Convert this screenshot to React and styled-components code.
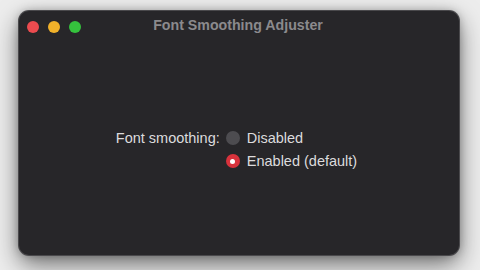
import styled, { createGlobalStyle } from "styled-components";

const GlobalStyle = createGlobalStyle`
  html, body {
    margin: 0;
    padding: 0;
    background: #ededed;
    font-family: "Liberation Sans", Arial, sans-serif;
    -webkit-font-smoothing: antialiased;
  }
`;

const Desktop = styled.div`
  width: 480px;
  height: 270px;
  padding: 11px 21px 15px 19px;
  box-sizing: border-box;
  overflow: hidden;
`;

const Window = styled.div`
  height: 100%;
  background: #272629;
  border-radius: 10px;
  box-shadow: 0 0 0 1px #4a494c, 0 9px 24px rgba(0, 0, 0, 0.55),
    0 0 8px rgba(0, 0, 0, 0.25);
  display: flex;
  flex-direction: column;
`;

const TitleBar = styled.div`
  position: relative;
  height: 28px;
  display: flex;
  align-items: center;
  justify-content: center;
`;

const Lights = styled.div`
  position: absolute;
  left: 8px;
  top: 10px;
  display: flex;
  gap: 9px;
`;

const Light = styled.span`
  width: 12px;
  height: 12px;
  border-radius: 50%;
  background: ${(p) => p.color};
`;

const Title = styled.div`
  margin-left: -2px;
  color: #8b8a8d;
  font-size: 14.2px;
  font-weight: bold;
`;

const Body = styled.div`
  flex: 1;
  display: flex;
  align-items: center;
  justify-content: center;
  padding-top: 5px;
  padding-right: 5px;
`;

const Form = styled.div`
  display: grid;
  grid-template-columns: auto auto;
  column-gap: 6px;
  color: #dcdbdd;
  font-size: 14.5px;
`;

const Label = styled.div`
  height: 16px;
  line-height: 16px;
  text-align: right;
`;

const Options = styled.div`
  display: flex;
  flex-direction: column;
  gap: 7px;
`;

const Option = styled.div`
  display: flex;
  align-items: center;
  gap: 7px;
  height: 16px;
  line-height: 16px;
`;

const Radio = styled.span`
  width: 14px;
  height: 14px;
  border-radius: 50%;
  box-sizing: border-box;
  display: flex;
  align-items: center;
  justify-content: center;
  background: ${(p) => (p.checked ? "#d8323c" : "#4d4c50")};
  &::after {
    content: "";
    width: 5px;
    height: 5px;
    border-radius: 50%;
    background: #fff;
    display: ${(p) => (p.checked ? "block" : "none")};
  }
`;

export default function App() {
  return (
    <>
      <GlobalStyle />
      <Desktop>
        <Window>
          <TitleBar>
            <Lights>
              <Light color="#ec4b4f" />
              <Light color="#f1b12a" />
              <Light color="#35c23d" />
            </Lights>
            <Title>Font Smoothing Adjuster</Title>
          </TitleBar>
          <Body>
            <Form>
              <Label>Font smoothing:</Label>
              <Options>
                <Option>
                  <Radio />
                  Disabled
                </Option>
                <Option>
                  <Radio checked />
                  Enabled (default)
                </Option>
              </Options>
            </Form>
          </Body>
        </Window>
      </Desktop>
    </>
  );
}
